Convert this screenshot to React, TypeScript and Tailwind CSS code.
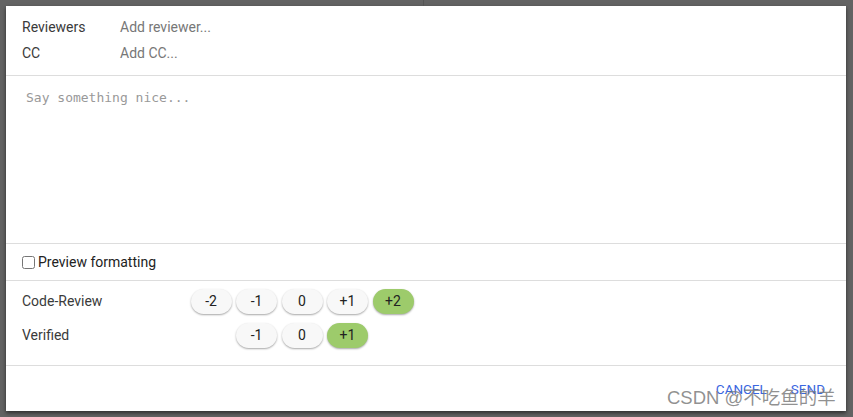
import React from 'react';

const labels = [
  { name: 'Code-Review', values: ['-2', '-1', '0', '+1', '+2'], selected: '+2' },
  { name: 'Verified', values: ['-1', '0', '+1'], selected: '+1' },
];

function VoteButton({ value, active }: { value: string; active: boolean }) {
  return (
    <button
      className={`flex h-[25px] w-[41px] items-center justify-center rounded-full text-[14px] text-[#222] shadow-[0_1px_2px_rgba(0,0,0,0.35)] ${
        active ? 'bg-[#9dcb6b]' : 'bg-[#f8f8f8]'
      }`}
    >
      {value}
    </button>
  );
}

export default function App() {
  return (
    <div
      className="relative h-[417px] w-[853px] overflow-hidden bg-[#636363] pl-[6px] pt-[6px]"
      style={{ fontFamily: 'Roboto, "Noto Sans", sans-serif' }}
    >
      <div className="absolute left-[423px] top-0 h-[6px] w-px bg-[#555]" />

      <div className="flex h-[405px] w-[840px] flex-col bg-white shadow-[0_2px_4px_rgba(0,0,0,0.55)]">
        {/* reviewers / cc */}
        <div className="h-[70px] border-b border-[#dddddd] pl-[16px] pt-[8px] text-[14px]">
          <div className="flex h-[26px] items-center">
            <span className="w-[98px] text-[#3a3a3a]">Reviewers</span>
            <span className="text-[#777]">Add reviewer...</span>
          </div>
          <div className="flex h-[26px] items-center">
            <span className="w-[98px] text-[#3a3a3a]">CC</span>
            <span className="text-[#777]">Add CC...</span>
          </div>
        </div>

        {/* message */}
        <div className="h-[168px] border-b border-[#dddddd] pl-[20px] pt-[13px]">
          <p
            className="text-[13px] leading-[18px] text-[#999]"
            style={{ fontFamily: '"DejaVu Sans Mono", "Liberation Mono", monospace' }}
          >
            Say something nice...
          </p>
        </div>

        {/* preview */}
        <div className="flex h-[37px] items-center border-b border-[#dddddd] pl-[16px] text-[14px] text-[#222]">
          <input type="checkbox" className="m-0 h-[13px] w-[13px]" />
          <span className="ml-[3px]">Preview formatting</span>
        </div>

        {/* labels */}
        <div className="flex h-[85px] flex-col border-b border-[#dddddd] pl-[16px] pt-[8px]">
          {labels.map((label) => (
            <div key={label.name} className="flex h-[34px] items-start">
              <span className="flex h-[25px] w-[166px] items-center text-[14px] text-[#3a3a3a]">{label.name}</span>
              <div className="flex w-[228px] justify-center gap-[4.5px]">
                {label.values.map((v) => (
                  <VoteButton key={v} value={v} active={v === label.selected} />
                ))}
              </div>
            </div>
          ))}
        </div>

        {/* actions */}
        <div className="flex flex-1 items-start justify-end gap-[24px] pr-[21px] pt-[13px] text-[13.5px] text-[#3a66e0]">
          <button>CANCEL</button>
          <button>SEND</button>
        </div>
      </div>

      <div
        className="absolute left-[667px] top-[386px] text-[18.5px] leading-[24px] text-[rgba(125,125,125,0.85)]"
        style={{ fontFamily: '"Liberation Sans", "Noto Sans CJK SC", sans-serif' }}
      >
        CSDN @不吃鱼的羊
      </div>
    </div>
  );
}
